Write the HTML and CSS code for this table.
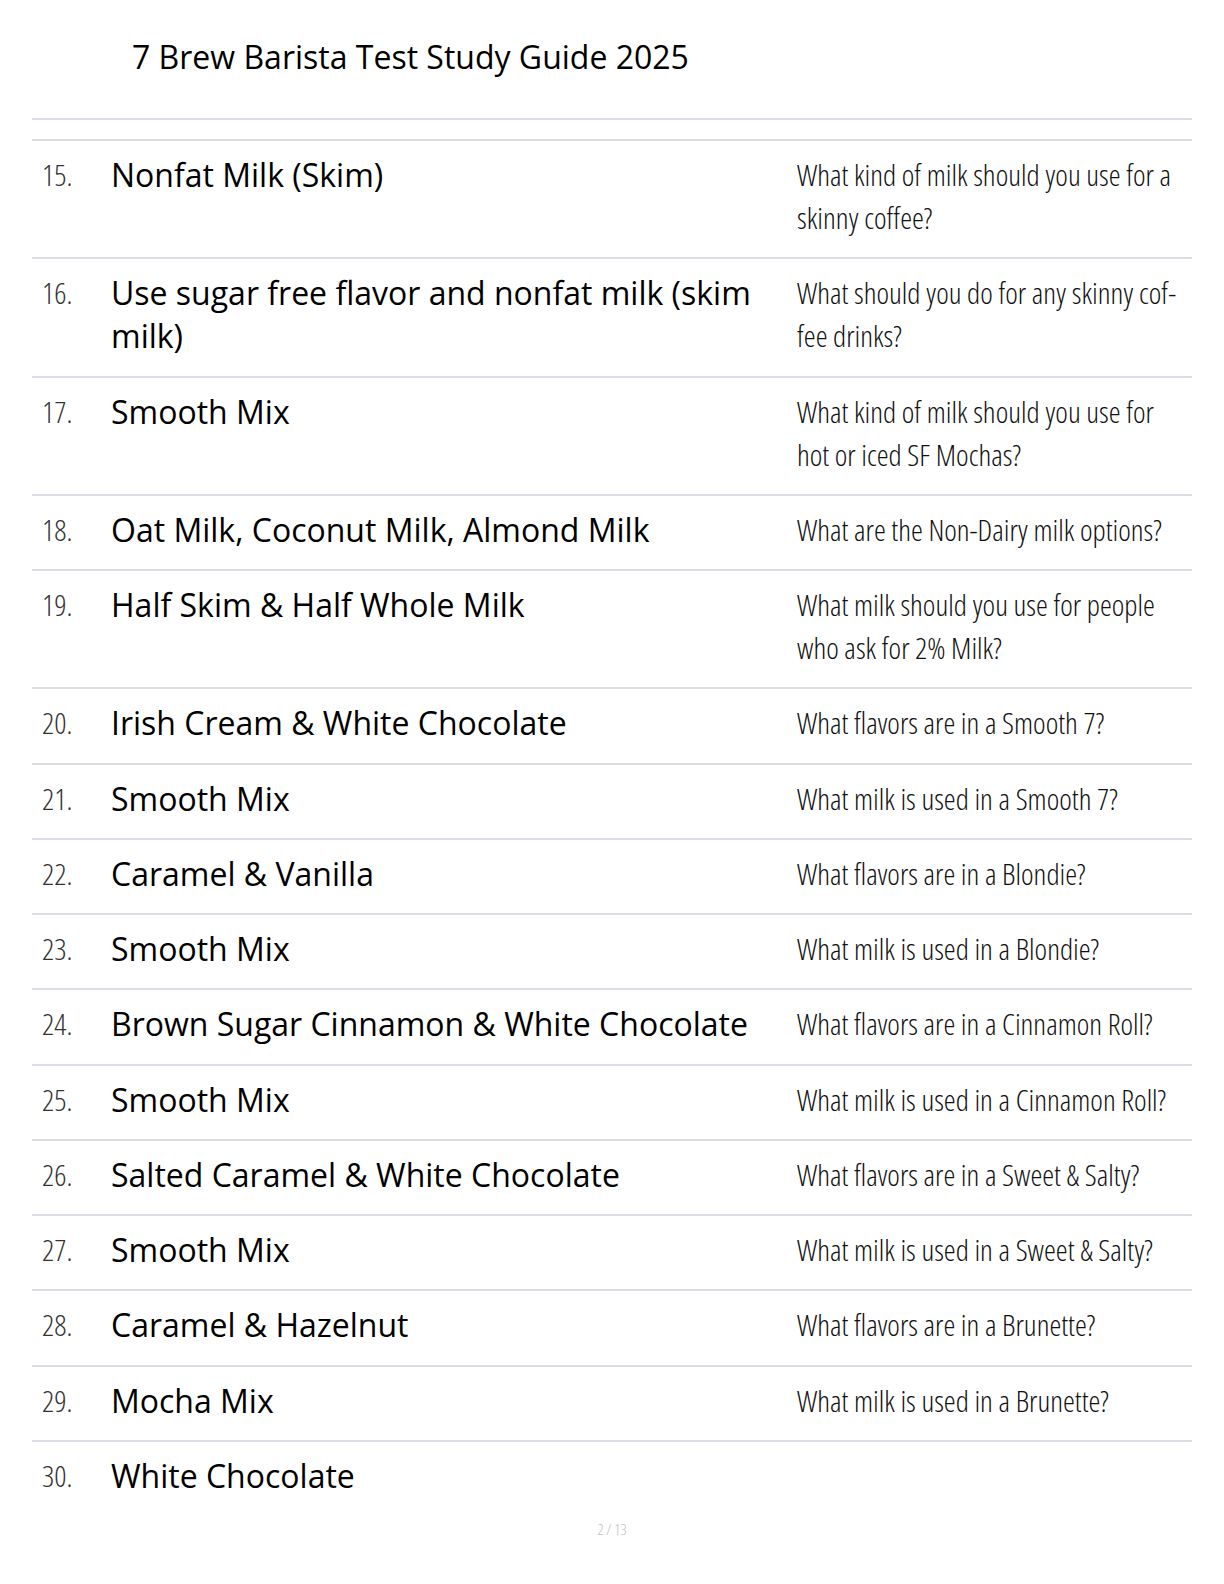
FILE: index.html
```html
<!DOCTYPE html>
<html lang="en">
<head>
<meta charset="utf-8">
<title>7 Brew Barista Test Study Guide 2025</title>
<link rel="stylesheet" href="styles.css">
</head>
<body>
<div class="page">
  <h1 class="title">7 Brew Barista Test Study Guide 2025</h1>
  <div class="list">
    <div class="head-row"></div>
    <div class="row"><div class="num">15.</div><div class="term">Nonfat Milk (Skim)</div><div class="def">What kind of milk should you use for a skinny coffee?</div></div>
    <div class="row"><div class="num">16.</div><div class="term">Use sugar free flavor and nonfat milk (skim milk)</div><div class="def">What should you do for any skinny cof&shy;fee drinks?</div></div>
    <div class="row"><div class="num">17.</div><div class="term">Smooth Mix</div><div class="def">What kind of milk should you use for hot or iced SF Mochas?</div></div>
    <div class="row"><div class="num">18.</div><div class="term">Oat Milk, Coconut Milk, Almond Milk</div><div class="def">What are the Non-Dairy milk options?</div></div>
    <div class="row"><div class="num">19.</div><div class="term">Half Skim &amp; Half Whole Milk</div><div class="def">What milk should you use for people who ask for 2% Milk?</div></div>
    <div class="row"><div class="num">20.</div><div class="term">Irish Cream &amp; White Chocolate</div><div class="def">What flavors are in a Smooth 7?</div></div>
    <div class="row"><div class="num">21.</div><div class="term">Smooth Mix</div><div class="def">What milk is used in a Smooth 7?</div></div>
    <div class="row"><div class="num">22.</div><div class="term">Caramel &amp; Vanilla</div><div class="def">What flavors are in a Blondie?</div></div>
    <div class="row"><div class="num">23.</div><div class="term">Smooth Mix</div><div class="def">What milk is used in a Blondie?</div></div>
    <div class="row"><div class="num">24.</div><div class="term">Brown Sugar Cinnamon &amp; White Chocolate</div><div class="def">What flavors are in a Cinnamon Roll?</div></div>
    <div class="row"><div class="num">25.</div><div class="term">Smooth Mix</div><div class="def">What milk is used in a Cinnamon Roll?</div></div>
    <div class="row"><div class="num">26.</div><div class="term">Salted Caramel &amp; White Chocolate</div><div class="def">What flavors are in a Sweet &amp; Salty?</div></div>
    <div class="row"><div class="num">27.</div><div class="term">Smooth Mix</div><div class="def">What milk is used in a Sweet &amp; Salty?</div></div>
    <div class="row"><div class="num">28.</div><div class="term">Caramel &amp; Hazelnut</div><div class="def">What flavors are in a Brunette?</div></div>
    <div class="row"><div class="num">29.</div><div class="term">Mocha Mix</div><div class="def">What milk is used in a Brunette?</div></div>
    <div class="row last"><div class="num">30.</div><div class="term">White Chocolate</div><div class="def"></div></div>
  </div>
  <div class="footer">2 / 13</div>
</div>
</body>
</html>
```

FILE: styles.css
```css
html, body {
  margin: 0;
  padding: 0;
  background: #ffffff;
}

.page {
  width: 1160px;
  margin-left: 32px;
  font-family: "Open Sans", "Noto Sans", sans-serif;
  color: #000;
}

.title {
  margin: 0;
  padding: 35px 0 0 100px;
  font-size: 32px;
  line-height: 43px;
  font-weight: 400;
  height: 83px;
  box-sizing: content-box;
}

.head-row {
  height: 19px;
  border-top: 2px solid #dcdce4;
}

.row {
  display: grid;
  grid-template-columns: 79px 686px 1fr;
  border-top: 2px solid #dcdce4;
  padding: 12px 0 18.25px;
}

.row.last {
  padding-bottom: 20px;
}

.num {
  padding-left: 10px;
  font-size: 30px;
  line-height: 43px;
  font-weight: 300;
  font-stretch: 75%;
  color: #333;
}

.term {
  font-size: 32px;
  line-height: 43px;
  font-weight: 400;
  padding-right: 10px;
}

.def {
  font-size: 30px;
  line-height: 43px;
  font-weight: 300;
  font-stretch: 75%;
  color: #111;
  padding-right: 12px;
}

.footer {
  text-align: center;
  font-size: 15px;
  line-height: 20px;
  font-weight: 300;
  font-stretch: 75%;
  color: #bbb;
  margin-top: 2px;
}
```
